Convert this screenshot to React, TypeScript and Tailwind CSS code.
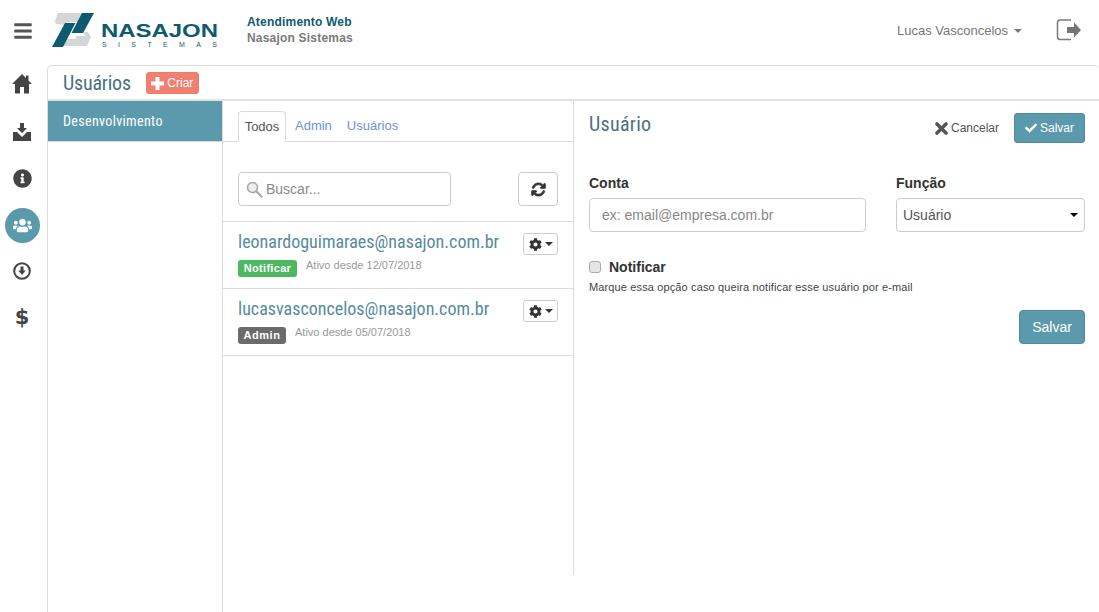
import { FaBars, FaCheck, FaCog, FaInfoCircle, FaUsers } from "react-icons/fa";
import { FaArrowsRotate } from "react-icons/fa6";

const contas = [
  { email: "leonardoguimaraes@nasajon.com.br", tag: "Notificar", tagClass: "bg-[#4cb85f] w-[59px] tracking-[0.3px]", desde: "12/07/2018" },
  { email: "lucasvasconcelos@nasajon.com.br", tag: "Admin", tagClass: "bg-[#6b6b6b] w-[48px] tracking-[0.6px]", desde: "05/07/2018" },
];

function Logo() {
  return (
    <svg width="168" height="36" viewBox="0 0 168 36" className="block">
      <path d="M6 1h26l-6 9H15l-2 3-9-1-1-3zM24 24h9l-2-4h5l3 5-4 9H10l5-7h9z" fill="#d4d6d8" />
      <path d="M0 35 13 11h10.500L11 35zM19.500 21 30 1h12L31 21z" fill="#0e5a70" />
      <text x="49" y="25" fontFamily="'Liberation Sans', sans-serif" fontWeight="700" fontSize="19" textLength="117" lengthAdjust="spacingAndGlyphs" fill="#0e5a70">
        NASAJON
      </text>
      <text x="50" y="35" fontFamily="'Liberation Sans', sans-serif" fontSize="7" textLength="115" fill="#0e5a70">
        SISTEMAS
      </text>
    </svg>
  );
}

function Casa() {
  return (
    <svg width="20" height="20" viewBox="0 0 20 20" fill="#444">
      <path d="M10 0 14 4V1.500h2.500V6.500L20 10h-3v9.500h-5V13H8v6.500H3V10H0z" />
    </svg>
  );
}

function DownloadTray() {
  return (
    <svg width="18" height="18" viewBox="0 0 18 18" fill="#444">
      <path d="M7 0h4v5h3l-5 5-5-5h3z" />
      <path d="M0 9h4l5 5 5-5h4v9H0z" />
    </svg>
  );
}

function CircleDown() {
  return (
    <svg width="18" height="18" viewBox="0 0 18 18">
      <circle cx="9" cy="9" r="7.800" fill="none" stroke="#444" strokeWidth="2" />
      <path d="M7.500 4.500h3v4h2.200L9 13 5.300 8.500h2.200z" fill="#444" />
    </svg>
  );
}

function Sair() {
  return (
    <svg width="26" height="22" viewBox="0 0 26 22">
      <path d="M15 1H4Q1.500 1 1.500 3.500v14.500Q1.500 20.500 4 20.500h11" fill="none" stroke="#7a7a7a" strokeWidth="1.500" />
      <path d="M11 8h7V3.500L25 11l-7 7.500V14h-7z" fill="#757575" />
    </svg>
  );
}

function Lupa() {
  return (
    <svg width="17" height="17" viewBox="0 0 17 17">
      <circle cx="6.500" cy="6.500" r="5" fill="#eee" stroke="#a8a8a8" strokeWidth="1.600" />
      <path d="M10.500 10.500 15.500 15.500" stroke="#a8a8a8" strokeWidth="2.200" strokeLinecap="round" />
    </svg>
  );
}

function Mais() {
  return (
    <svg width="13" height="13" viewBox="0 0 13 13" fill="#fff">
      <path d="M4.500 0h4v4.500H13v4H8.500V13h-4V8.500H0v-4h4.500z" />
    </svg>
  );
}

function Fechar() {
  return (
    <svg width="13" height="13" viewBox="0 0 13 13">
      <path d="M2 2 11 11M11 2 2 11" stroke="#555" strokeWidth="3.600" strokeLinecap="round" />
    </svg>
  );
}

function Caret({ className = "" }: { className?: string }) {
  return <span className={`inline-block border-x-4 border-t-4 border-x-transparent ${className}`} />;
}

export default function App() {
  return (
    <div className="h-[612px] w-[1099px] overflow-hidden bg-white font-['Liberation_Sans',sans-serif] text-[14px] text-[#333]">
      <header className="flex h-[60px] items-center">
        <div className="flex w-[47px] justify-center pt-[2px] pr-[1px] text-[#555]">
          <FaBars size={20} />
        </div>
        <div className="ml-[5px]">
          <Logo />
        </div>
        <div className="ml-[27px] flex flex-col text-[12px] leading-[16px] font-bold tracking-[0.2px]">
          <span className="text-[#0e5a70]">Atendimento Web</span>
          <span className="text-[#7a7a7a]">Nasajon Sistemas</span>
        </div>
        <div className="ml-auto flex items-center gap-[6px] pt-[2px] text-[13px] text-[#777]">
          Lucas Vasconcelos
          <Caret className="border-t-[#777]" />
        </div>
        <div className="mr-[17px] ml-[34px]">
          <Sair />
        </div>
      </header>

      <div className="flex h-[552px]">
        <nav className="flex w-[47px] shrink-0 flex-col items-center pr-[3px] text-[#444]">
          <div className="flex h-[48px] items-center"><Casa /></div>
          <div className="flex h-[47px] items-center"><DownloadTray /></div>
          <div className="flex h-[47px] items-center"><FaInfoCircle size={19} /></div>
          <div className="flex h-[47px] items-center">
            <div className="flex size-[35px] items-center justify-center rounded-full bg-[#5b9aac] text-white">
              <FaUsers size={19} />
            </div>
          </div>
          <div className="flex h-[44px] items-center"><CircleDown /></div>
          <div className="flex h-[50px] items-center font-['DejaVu_Sans',sans-serif] text-[21px] font-bold">$</div>
        </nav>

        <main className="mt-[5px] flex min-w-0 flex-1 flex-col rounded-t-[5px] border-t border-l border-[#dcdcdc]">
          <div className="flex h-[35px] shrink-0 items-center border-b-2 border-[#e2e2e2] pl-[15px]">
            <h1 className="font-['Roboto',sans-serif] text-[20px] tracking-[-0.2px] text-[#4a7082] [font-stretch:75%]">Usuários</h1>
            <button className="mt-[1px] ml-[15px] flex h-[22px] w-[53px] items-center justify-center gap-[3px] rounded-[3px] border border-[#ec7d6b] bg-[#f0806f] text-[12px] text-white">
              <Mais />
              Criar
            </button>
          </div>

          <div className="flex min-h-0 flex-1">
            <aside className="w-[175px] shrink-0 border-r border-[#dcdcdc]">
              <div className="flex h-[41px] items-center border-b border-[#dcdcdc] bg-[#5b9aac] pl-[15px] font-['Roboto',sans-serif] text-[14px] tracking-[0.35px] text-white [font-stretch:75%]">
                Desenvolvimento
              </div>
            </aside>

            <section className="mb-[37px] w-[351px] shrink-0 border-r border-[#dcdcdc]">
              <div className="flex h-[41px] items-end border-b border-[#dcdcdc] pl-[15px] text-[13px]">
                <div className="-mb-px flex h-[31px] w-[48px] items-center justify-center rounded-t-[4px] border border-b-white border-[#dcdcdc] bg-white text-[#555]">
                  Todos
                </div>
                <div className="ml-[2px] flex h-[30px] items-center px-[7px] text-[#6f8fe0]">Admin</div>
                <div className="ml-[5px] flex h-[30px] items-center pl-[3px] text-[#6f8fe0]">Usuários</div>
              </div>

              <div className="flex h-[80px] items-start justify-between border-b border-[#dcdcdc] px-[15px] pt-[30px]">
                <div className="relative">
                  <input
                    placeholder="Buscar..."
                    className="h-[34px] w-[213px] rounded-[4px] border border-[#ccc] pl-[27px] text-[14px] outline-none placeholder:text-[#888]"
                  />
                  <span className="absolute top-[9px] left-[8px]"><Lupa /></span>
                </div>
                <button className="flex h-[34px] w-[40px] items-center justify-center rounded-[4px] border border-[#ccc] text-[#333]">
                  <FaArrowsRotate size={15} stroke="currentColor" strokeWidth={25} />
                </button>
              </div>

              {contas.map((c) => (
                <div key={c.email} className="flex h-[67px] justify-between border-b border-[#dcdcdc] px-[15px] pt-[8px]">
                  <div>
                    <div className="font-['Roboto',sans-serif] text-[18px] leading-[24px] text-[#568b9d] [font-stretch:75%]">
                      {c.email}
                    </div>
                    <div className="mt-[6px] flex items-start">
                      <span className={`flex h-[17px] items-center justify-center rounded-[3px] text-[11px] font-bold text-white ${c.tagClass}`}>
                        {c.tag}
                      </span>
                      <span className="-mt-px ml-[9px] text-[11px] leading-[13px] text-[#999]">Ativo desde {c.desde}</span>
                    </div>
                  </div>
                  <button className="mt-[3px] flex h-[22px] w-[35px] items-center justify-center gap-[3px] rounded-[3px] border border-[#ccc] text-[#333]">
                    <FaCog size={13} />
                    <Caret className="border-t-[#333]" />
                  </button>
                </div>
              ))}
            </section>

            <section className="flex-1 px-[15px]">
              <div className="flex h-[42px] items-start justify-between pt-[12px]">
                <h2 className="font-['Roboto',sans-serif] text-[20px] leading-[22px] tracking-[0.3px] text-[#4a7082] [font-stretch:75%]">Usuário</h2>
                <div className="flex items-center">
                  <span className="flex items-center gap-[3px] text-[12px] text-[#555]">
                    <Fechar />
                    Cancelar
                  </span>
                  <button className="ml-[15px] flex h-[30px] w-[71px] items-center justify-center gap-[3px] rounded-[3px] border border-[#4f8a9b] bg-[#5b9aac] text-[12px] text-white">
                    <FaCheck size={12} />
                    Salvar
                  </button>
                </div>
              </div>

              <div className="mt-[30px] flex gap-[30px]">
                <label className="block w-[277px]">
                  <span className="block h-[25px] text-[14px] leading-[20px] font-bold">Conta</span>
                  <input
                    placeholder="ex: email@empresa.com.br"
                    className="h-[34px] w-full rounded-[4px] border border-[#ccc] px-[12px] text-[14px] outline-none placeholder:text-[#888]"
                  />
                </label>
                <label className="block w-[189px]">
                  <span className="block h-[25px] text-[14px] leading-[20px] font-bold">Função</span>
                  <div className="relative">
                    <select className="h-[34px] w-full appearance-none rounded-[4px] border border-[#ccc] bg-white px-[6px] text-[14px] text-[#555]">
                      <option>Usuário</option>
                    </select>
                    <Caret className="absolute top-[15px] right-[7px] border-t-black" />
                  </div>
                </label>
              </div>

              <label className="mt-[25px] flex items-center gap-[8px] text-[14px] leading-[20px] font-bold">
                <input type="checkbox" className="m-0 size-[12px] appearance-none rounded-[3px] border border-[#aaa] bg-[#e6e6e6]" />
                Notificar
              </label>
              <p className="mt-[2px] text-[11px] leading-[16px] tracking-[0.13px] text-[#444]">
                Marque essa opção caso queira notificar esse usuário por e-mail
              </p>
              <div className="mt-[15px] flex justify-end">
                <button className="h-[34px] w-[66px] rounded-[4px] border border-[#4f8a9b] bg-[#5b9aac] text-[14px] text-white">
                  Salvar
                </button>
              </div>
            </section>
          </div>
        </main>
      </div>
    </div>
  );
}
